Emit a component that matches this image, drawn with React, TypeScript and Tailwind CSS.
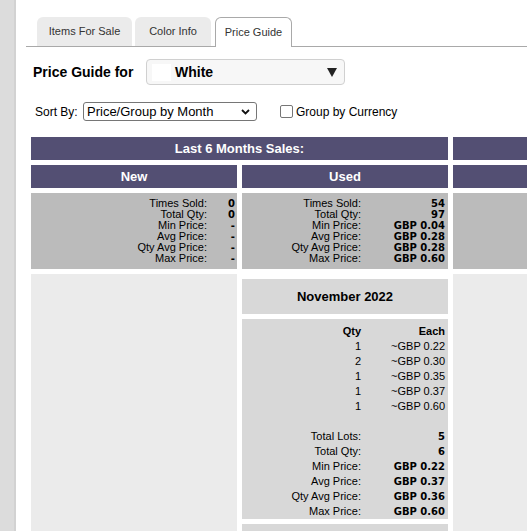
import React from "react";

const usedStats: [string, string][] = [
  ["Times Sold:", "54"],
  ["Total Qty:", "97"],
  ["Min Price:", "GBP 0.04"],
  ["Avg Price:", "GBP 0.28"],
  ["Qty Avg Price:", "GBP 0.28"],
  ["Max Price:", "GBP 0.60"],
];

const newStats: [string, string][] = [
  ["Times Sold:", "0"],
  ["Total Qty:", "0"],
  ["Min Price:", "-"],
  ["Avg Price:", "-"],
  ["Qty Avg Price:", "-"],
  ["Max Price:", "-"],
];

const sales: [string, string][] = [
  ["1", "~GBP 0.22"],
  ["2", "~GBP 0.30"],
  ["1", "~GBP 0.35"],
  ["1", "~GBP 0.37"],
  ["1", "~GBP 0.60"],
];

const totals: [string, string][] = [
  ["Total Lots:", "5"],
  ["Total Qty:", "6"],
  ["Min Price:", "GBP 0.22"],
  ["Avg Price:", "GBP 0.37"],
  ["Qty Avg Price:", "GBP 0.36"],
  ["Max Price:", "GBP 0.60"],
];

function Stats({ rows, narrow }: { rows: [string, string][]; narrow?: boolean }) {
  return (
    <div
      className={
        narrow
          ? "grid grid-cols-[1fr_28px] bg-[#bbbbbb] py-[5px] pr-[2px] text-[11px] leading-[11px]"
          : "grid grid-cols-[1fr_84px] bg-[#bbbbbb] py-[5px] pr-[3px] text-[11px] leading-[11px]"
      }
    >
      {rows.map(([l, v]) => (
        <React.Fragment key={l}>
          <div className="text-right">{l}</div>
          <div className="text-right font-['DejaVu_Sans',sans-serif] text-[10px] font-bold">{v}</div>
        </React.Fragment>
      ))}
    </div>
  );
}

export default function App() {
  return (
    <div className="flex h-screen w-full overflow-hidden bg-white font-['Liberation_Sans',Arial,sans-serif] text-black">
      <div className="w-[16px] shrink-0 border-r-2 border-[#d2d2d2] bg-[#dcdcdc]" />
      <div className="min-w-0 flex-1 pt-[17px]">
        {/* Tabs */}
        <div className="ml-[10px] flex items-end border-b border-[#a9a9a9] pl-[11px]">
          <div className="mr-[3px] flex h-[29px] w-[95px] items-center justify-center rounded-t-[6px] bg-[#ebebeb] text-[11px] text-[#333]">
            Items For Sale
          </div>
          <div className="mr-[4px] flex h-[29px] w-[76px] items-center justify-center rounded-t-[6px] bg-[#ebebeb] text-[11px] text-[#333]">
            Color Info
          </div>
          <div className="-mb-px flex h-[30px] w-[77px] items-center justify-center rounded-t-[6px] border border-b-0 border-[#a9a9a9] bg-white text-[11px] text-[#333]">
            Price Guide
          </div>
        </div>

        {/* Price guide for */}
        <div className="ml-[17px] mt-[12px] flex items-center">
          <div className="w-[113px] text-[14px] font-bold">Price Guide for</div>
          <div className="flex h-[26px] w-[199px] items-center rounded-[4px] border border-[#d0d0d0] bg-[#f7f7f7] pl-[5px] pr-[7px]">
            <div className="h-[17px] w-[19px] bg-white" />
            <div className="ml-[4px] flex-1 text-[14px] font-bold">White</div>
            <svg width="10" height="9" viewBox="0 0 10 9">
              <polygon points="0,0 10,0 5,9" fill="#222" />
            </svg>
          </div>
        </div>

        {/* Sort by */}
        <div className="ml-[19px] mt-[17px] flex items-center text-[12px]">
          <span className="w-[48px]">Sort By:</span>
          <div className="flex h-[19px] w-[174px] items-center justify-between rounded-[3px] border border-[#767676] bg-white pl-[3px] pr-[6px] text-[13px]">
            <span>Price/Group by Month</span>
            <svg width="9" height="6" viewBox="0 0 9 6">
              <polyline points="1,1 4.5,4.5 8,1" fill="none" stroke="#111" strokeWidth="1.8" />
            </svg>
          </div>
          <div className="ml-[23px] h-[13px] w-[13px] rounded-[2px] border border-[#767676] bg-white" />
          <span className="ml-[3px]">Group by Currency</span>
        </div>

        {/* Tables */}
        <div className="ml-[15px] mt-[16px] grid grid-cols-[206px_206px_200px] gap-x-[5px] gap-y-[5px]">
          <div className="col-span-2 flex h-[23px] items-center justify-center bg-[#534f73] text-[13px] font-bold text-white">
            Last 6 Months Sales:
          </div>
          <div className="h-[23px] bg-[#534f73]" />

          <div className="flex h-[23px] items-center justify-center bg-[#534f73] text-[13px] font-bold text-white">
            New
          </div>
          <div className="flex h-[23px] items-center justify-center bg-[#534f73] text-[13px] font-bold text-white">
            Used
          </div>
          <div className="h-[23px] bg-[#534f73]" />

          <Stats rows={newStats} narrow />
          <Stats rows={usedStats} />
          <div className="bg-[#bbbbbb]" />

          <div className="bg-[#ebebeb]" />
          <div className="flex flex-col gap-[5px] pt-[5px]">
            <div className="flex h-[35px] items-center justify-center bg-[#d8d8d8] text-[13px] font-bold">
              November 2022
            </div>
            <div className="grid grid-cols-[1fr_84px] bg-[#d8d8d8] pr-[3px] pt-[5px] text-[11px] leading-[15px]">
              <div className="text-right font-bold">Qty</div>
              <div className="text-right font-bold">Each</div>
              {sales.map(([q, e], i) => (
                <React.Fragment key={i}>
                  <div className="text-right">{q}</div>
                  <div className="text-right">{e}</div>
                </React.Fragment>
              ))}
              <div className="col-span-2 h-[15px]" />
              {totals.map(([l, v]) => (
                <React.Fragment key={l}>
                  <div className="text-right">{l}</div>
                  <div className="text-right font-['DejaVu_Sans',sans-serif] text-[10px] font-bold">{v}</div>
                </React.Fragment>
              ))}
            </div>
            <div className="h-[100px] bg-[#d8d8d8]" />
          </div>
          <div className="bg-[#ebebeb]" />
        </div>
      </div>
    </div>
  );
}
